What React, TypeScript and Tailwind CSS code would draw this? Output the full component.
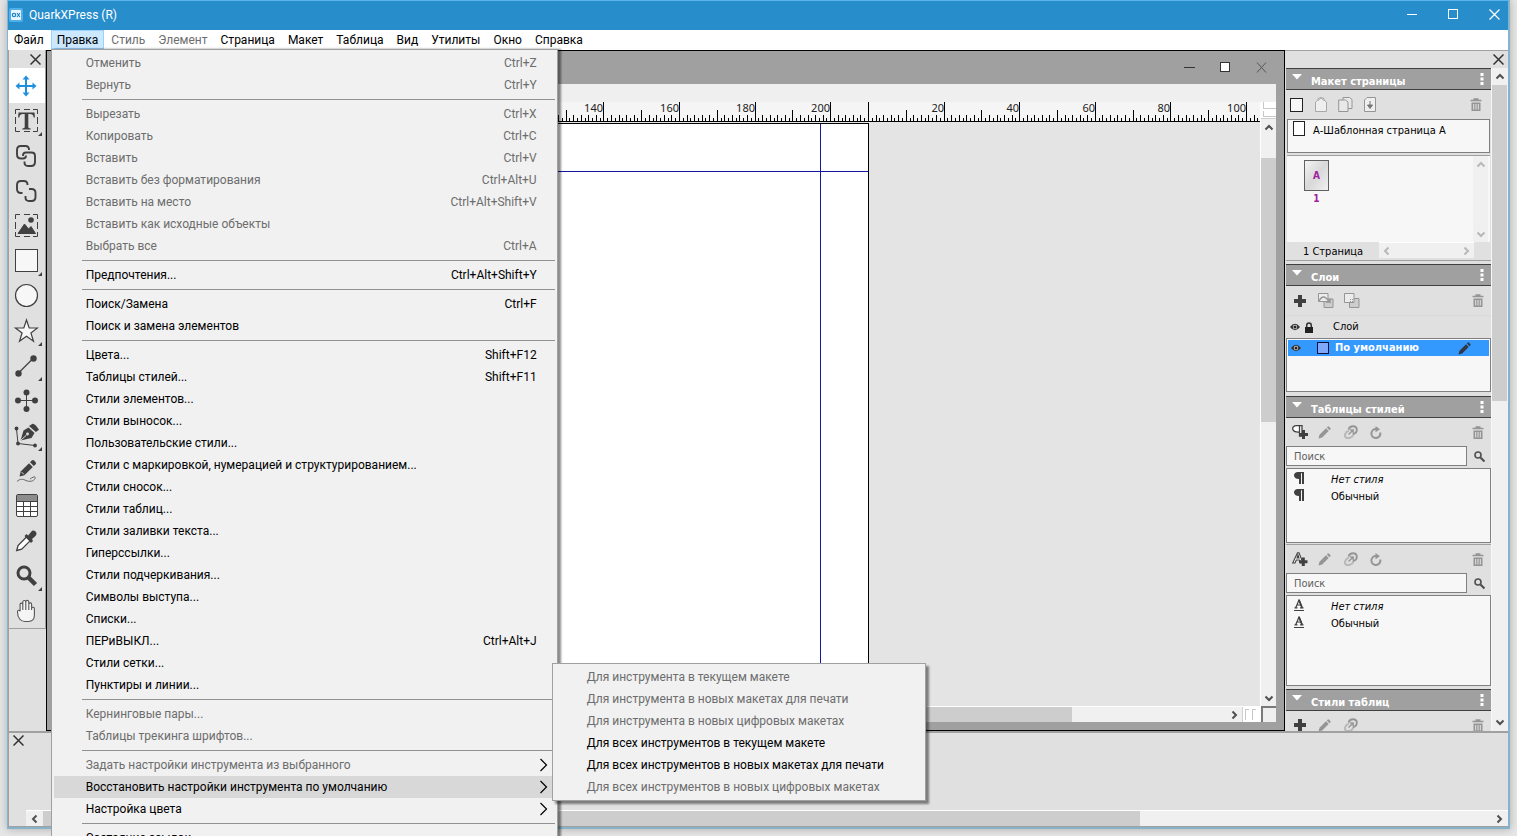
import React from "react";

type MenuEntry = { label: string; keys?: string; off?: boolean; sub?: boolean; active?: boolean } | null;

const MENU: MenuEntry[] = [
  { label: "Отменить", keys: "Ctrl+Z", off: true },
  { label: "Вернуть", keys: "Ctrl+Y", off: true },
  null,
  { label: "Вырезать", keys: "Ctrl+X", off: true },
  { label: "Копировать", keys: "Ctrl+C", off: true },
  { label: "Вставить", keys: "Ctrl+V", off: true },
  { label: "Вставить без форматирования", keys: "Ctrl+Alt+U", off: true },
  { label: "Вставить на место", keys: "Ctrl+Alt+Shift+V", off: true },
  { label: "Вставить как исходные объекты", off: true },
  { label: "Выбрать все", keys: "Ctrl+A", off: true },
  null,
  { label: "Предпочтения...", keys: "Ctrl+Alt+Shift+Y" },
  null,
  { label: "Поиск/Замена", keys: "Ctrl+F" },
  { label: "Поиск и замена элементов" },
  null,
  { label: "Цвета...", keys: "Shift+F12" },
  { label: "Таблицы стилей...", keys: "Shift+F11" },
  { label: "Стили элементов..." },
  { label: "Стили выносок..." },
  { label: "Пользовательские стили..." },
  { label: "Стили с маркировкой, нумерацией и структурированием..." },
  { label: "Стили сносок..." },
  { label: "Стили таблиц..." },
  { label: "Стили заливки текста..." },
  { label: "Гиперссылки..." },
  { label: "Стили подчеркивания..." },
  { label: "Символы выступа..." },
  { label: "Списки..." },
  { label: "ПЕРиВЫКЛ...", keys: "Ctrl+Alt+J" },
  { label: "Стили сетки..." },
  { label: "Пунктиры и линии..." },
  null,
  { label: "Кернинговые пары...", off: true },
  { label: "Таблицы трекинга шрифтов...", off: true },
  null,
  { label: "Задать настройки инструмента из выбранного", off: true, sub: true },
  { label: "Восстановить настройки инструмента по умолчанию", sub: true, active: true },
  { label: "Настройка цвета", sub: true },
  null,
  { label: "Состояние ссылок..." },
];

const SUBMENU = [
  { label: "Для инструмента в текущем макете", off: true },
  { label: "Для инструмента в новых макетах для печати", off: true },
  { label: "Для инструмента в новых цифровых макетах", off: true },
  { label: "Для всех инструментов в текущем макете", off: false },
  { label: "Для всех инструментов в новых макетах для печати", off: false },
  { label: "Для всех инструментов в новых цифровых макетах", off: true },
];

function Submenu() {
  return (
    <div role="menu" className="absolute top-[-113px] left-[500px] z-20 w-[374px] border border-[#a0a0a0] bg-[#f1f1f1] py-[2px] shadow-[3px_3px_2px_rgba(0,0,0,0.45)]">
      {SUBMENU.map((s) => (
        <button key={s.label} role="menuitem" disabled={s.off} className={"flex h-[22px] w-full items-center pl-[34px] " + (s.off ? "text-[#6d6d6d]" : "text-black")}>
          {s.label}
        </button>
      ))}
    </div>
  );
}

function EditMenu() {
  return (
    <div role="menu" className="absolute top-[19px] left-0 z-10 w-[507px] border border-[#a0a0a0] bg-[#f1f1f1] py-[2px] shadow-[3px_0_2px_rgba(0,0,0,0.45)]">
      {MENU.map((m, i) =>
        m === null ? (
          <div key={i} role="separator" className="flex h-[7px] items-center pr-[2px] pl-[30px]">
            <div className="h-px w-full bg-[#919191]" />
          </div>
        ) : (
          <div key={i} className="relative px-[2px]">
            <button
              role="menuitem"
              disabled={m.off}
              className={"flex h-[22px] w-full items-center justify-between pr-[18px] pl-8 whitespace-nowrap " + (m.off ? "text-[#6d6d6d] " : "text-black ") + (m.active ? "bg-[#d8d8d8]" : "")}
            >
              <span>{m.label}</span>
              {m.keys && <span>{m.keys}</span>}
              {m.sub && (
                <svg width="10" height="14" viewBox="0 0 10 14" className="-mr-3" fill="none" stroke="#000" strokeWidth="1.2">
                  <path d="M1.5 1l6 6-6 6" />
                </svg>
              )}
            </button>
            {m.active && <Submenu />}
          </div>
        ),
      )}
    </div>
  );
}

const BAR = [
  { label: "Файл" },
  { label: "Правка", open: true },
  { label: "Стиль", off: true },
  { label: "Элемент", off: true },
  { label: "Страница" },
  { label: "Макет" },
  { label: "Таблица" },
  { label: "Вид" },
  { label: "Утилиты" },
  { label: "Окно" },
  { label: "Справка" },
];

function MenuBar() {
  return (
    <nav className="flex h-5 gap-px bg-white text-[12px]">
      {BAR.map((b) => (
        <div key={b.label} className="relative">
          <button
            disabled={b.off}
            className={
              "flex h-[19px] items-center " +
              (b.open ? "border border-[#99d1ff] bg-[#cce8ff] px-[5px] " : "px-[6px] ") +
              (b.off ? "text-[#6d6d6d]" : "text-black")
            }
          >
            {b.label}
          </button>
          {b.open && <EditMenu />}
        </div>
      ))}
    </nav>
  );
}

function PixelCross() {
  return (
    <svg width="11" height="11" viewBox="0 0 11 11" fill="none" stroke="#333" strokeWidth="1.5">
      <path d="M.5.5l10 10M10.5.5l-10 10" />
    </svg>
  );
}

const D = "#404040";

const TOOLS: { name: string; more?: boolean; art: React.ReactNode }[] = [
  {
    name: "Перемещение",
    art: (
      <g stroke="#1f8fe0" fill="#1f8fe0">
        <path d="M13 5v16M5 13h16" strokeWidth="2" />
        <path d="M13 2.5l3.5 4h-7zM13 23.500l3.500-4h-7zM2.500 13l4-3.500v7zM23.500 13l-4-3.500v7z" stroke="none" />
      </g>
    ),
  },
  {
    name: "Текст",
    more: true,
    art: (
      <g>
        <path d="M2.500 6V1.500H7M11 1.500h6M20 1.500h4.500V6M24.500 9v7M24.500 19v4.500H20M17 23.500h-6M7 23.500H2.500V19M2.500 16V9" fill="none" stroke={D} />
        <path d="M5.500 4.500h16l.4 5h-1.200c-.5-2.600-1.400-3.400-3.800-3.400h-1.600v12.400c0 1.600.5 1.900 2.400 2v1H9.300v-1c1.900-.1 2.400-.4 2.400-2V6.100H10.100c-2.400 0-3.300.8-3.800 3.400H5.100z" fill={D} />
      </g>
    ),
  },
  {
    name: "Связь",
    art: (
      <g fill="none" stroke={D} strokeWidth="1.900">
        <path d="M16 7V6.500q0-3.500-3.500-3.500H8Q4 3 4 7v4.500q0 4 4 4h2q3 0 3-3" />
        <path d="M10 13v-.5q0-3 3-3h5.500q3.500 0 3.500 3.500v6q0 4-4 4h-3q-3.500 0-3.500-3.500v-1" />
      </g>
    ),
  },
  {
    name: "Разрыв связи",
    art: (
      <g fill="none" stroke={D} strokeWidth="1.900">
        <path d="M14.500 7V6.500Q14.500 3 11 3H8Q4 3 4 7v4q0 4 4 4h1.500" />
        <path d="M16 11h2.500Q22.500 11 22.500 15v4q0 4-4 4h-2.500q-3.500 0-3.500-3.500v-1.500" />
      </g>
    ),
  },
  {
    name: "Изображение",
    art: (
      <g>
        <path d="M2.500 6V1.500H7M11 1.500h6M20 1.500h4.500V6M24.500 9v7M24.500 19v4.500H20M17 23.500h-6M7 23.500H2.500V19M2.500 16V9" fill="none" stroke={D} />
        <path d="M5 20.500l6.500-9.500 4 5 2.500-2.500 4.500 7z" fill={D} stroke={D} strokeLinejoin="round" />
        <circle cx="18" cy="7" r="2.800" fill={D} />
      </g>
    ),
  },
  { name: "Прямоугольник", more: true, art: <rect x="2.500" y="1.500" width="22" height="22" fill="#f7f7f7" stroke={D} /> },
  { name: "Овал", art: <circle cx="13.500" cy="12.500" r="11" fill="#f7f7f7" stroke={D} strokeWidth="1.200" /> },
  {
    name: "Звезда",
    more: true,
    art: <path d="M13.500 2l2.700 8h8.300l-6.600 5 2.600 8.300-7-5.100-7 5.100L9.100 15l-6.600-5h8.300z" fill="#f7f7f7" stroke={D} strokeWidth="1.200" />,
  },
  {
    name: "Линия",
    more: true,
    art: (
      <g fill={D}>
        <path d="M5.500 20L20 5.500" stroke={D} strokeWidth="1.300" />
        <circle cx="5.500" cy="20.500" r="3.200" />
        <circle cx="20.500" cy="5.500" r="3.200" />
      </g>
    ),
  },
  {
    name: "Ортогональная линия",
    art: (
      <g fill={D}>
        <path d="M5 12.500h18M13.500 4v18" stroke={D} />
        <circle cx="5" cy="12.500" r="3" />
        <circle cx="22" cy="12.500" r="3" />
        <circle cx="13.500" cy="4.500" r="3" />
        <circle cx="13.500" cy="21" r="3" />
      </g>
    ),
  },
  {
    name: "Перо",
    more: true,
    art: (
      <g>
        <path d="M3.500 6l1.500 14.500 17 2" fill="none" stroke={D} />
        <circle cx="3.500" cy="5.500" r="1.900" fill={D} />
        <circle cx="5" cy="20.500" r="1.900" fill={D} />
        <circle cx="22" cy="22.500" r="1.900" fill={D} />
        <path d="M7.500 17.500L10.500 7.500l5-3 6 5.500-3 5z" fill={D} />
        <path d="M16 3l3.500-2.300q2.500-.5 6.500 6L22.800 9z" fill={D} />
        <path d="M7.500 17.500l6-5.500" stroke="#e0e0e0" />
        <circle cx="14.500" cy="11" r="1.400" fill="#e0e0e0" />
      </g>
    ),
  },
  {
    name: "Карандаш",
    art: (
      <g fill={D}>
        <path d="M6.500 18.500l1.200-5L16 5.300l3.800 3.800-8.300 8.200z" />
        <path d="M17 4.300l1.700-1.700q1.200-1.200 2.500 0l1.300 1.300q1.200 1.300 0 2.500L20.800 8z" />
        <path d="M4 23.500c3-3 6-2.500 9-1s8 1 9-2-2-1.500-5 .5" fill="none" stroke="#666" strokeWidth="1" />
        <path d="M8.700 14.200l2.200 2.200" stroke="#e0e0e0" />
      </g>
    ),
  },
  {
    name: "Таблица",
    art: (
      <g>
        <rect x="3.500" y="1.500" width="21" height="22" rx="1.500" fill="#fff" stroke={D} />
        <path d="M4 2h20v6H4z" fill="#8c8c8c" />
        <path d="M3.500 8.500h21M3.500 13.500h21M3.500 18.500h21M10.500 8.500v15M17.500 8.500v15" stroke={D} />
      </g>
    ),
  },
  {
    name: "Пипетка",
    art: (
      <g>
        <path d="M13.500 9L5 17.500 3.700 22.500l5-1.300 8.600-8.600z" fill="#fff" stroke={D} strokeWidth="1.300" />
        <path d="M11.500 8l2-2 1.700 1.500L18 4q2-2.500 4.500-.5 2 2 0 4.500l-3.500 3 1 2-2 2z" fill={D} />
      </g>
    ),
  },
  {
    name: "Масштаб",
    more: true,
    art: (
      <g fill="none" stroke={D}>
        <circle cx="11" cy="10" r="6" strokeWidth="3" />
        <path d="M15.500 14.500l7 7" strokeWidth="4.500" />
      </g>
    ),
  },
  {
    name: "Рука",
    art: (
      <path
        d="M4.500 14c-.2-2 2-2.400 2.600-.8V6.600c0-2 2.600-2 2.700 0V4c.2-2 2.900-2 3 0v-.5c.3-1.700 2.900-1.500 3 .5v2c.4-1.600 2.700-1.400 2.800.3v4c.4-1.500 2.800-1.300 2.800.4v6.300c0 4-2.400 6.500-6 6.500h-3.600c-4 0-7.300-3.500-7.300-9.500zM9.800 6v6M12.800 4v8M15.800 5v7M18.600 8v4"
        fill="#f5f5f5"
        stroke="#555"
        strokeWidth="1.100"
      />
    ),
  },
];

function Toolbar() {
  return (
    <aside className="flex w-[38px] shrink-0 flex-col border-l border-[#a0a0a0] bg-[#e0e0e0]">
      <div className="border-r border-b border-[#a0a0a0]">
        <div className="flex h-[18px] items-center justify-end pr-1">
          <button aria-label="Закрыть панель инструментов">
            <PixelCross />
          </button>
        </div>
        {TOOLS.map((t, i) => (
          <button key={t.name} aria-label={t.name} className={"relative flex h-[35px] w-full items-center pl-1 " + (i === 0 ? "bg-white" : "")}>
            <svg width="26" height="26" viewBox="0 0 26 26">
              {t.art}
            </svg>
            {t.more && (
              <svg width="4" height="4" viewBox="0 0 4 4" className="absolute right-[3px] bottom-[2px]">
                <path d="M4 0v4H0z" fill={D} />
              </svg>
            )}
          </button>
        ))}
      </div>
    </aside>
  );
}

function Chevron({ dir, dim }: { dir: "up" | "down" | "left" | "right"; dim?: boolean }) {
  const d = {
    up: "M1.500 6.500L5 3l3.500 3.500",
    down: "M1.500 3.500L5 7l3.500-3.500",
    left: "M6.500 1.500L3 5l3.500 3.500",
    right: "M3.500 1.500L7 5 3.500 8.500",
  }[dir];
  return (
    <svg width="10" height="10" viewBox="0 0 10 10" fill="none" stroke={dim ? "#b8b8b8" : "#505050"} strokeWidth="2">
      <path d={d} />
    </svg>
  );
}

const MM = 3.78;
const EDGE = 813.5;

function Ruler() {
  const ticks: React.ReactNode[] = [];
  for (let mm = -210; mm <= 103; mm++) {
    const x = Math.floor(EDGE + mm * MM) + 0.5;
    const up = mm < 0 ? mm + 210 : mm;
    const top = up % 20 === 0 || mm === 0 ? 0 : up % 10 === 0 ? 8 : up % 2 === 0 ? 13 : 16;
    ticks.push(<path key={mm} d={`M${x} ${top}V19`} stroke="#000" />);
  }
  const labels: [number, string][] = [];
  for (let v = 140; v <= 200; v += 20) labels.push([EDGE + (v - 210) * MM, String(v)]);
  for (let v = 20; v <= 100; v += 20) labels.push([EDGE + v * MM, String(v)]);
  return (
    <div className="h-5 flex-1 overflow-x-clip border-b border-black bg-[#f5f5f5] font-['Noto_Sans',sans-serif]">
      <svg width="1205" height="19" className="overflow-visible">
        {ticks}
        {labels.map(([x, t]) => (
          <text key={x} x={Math.floor(x)} y="10" textAnchor="end" fill="#222" className="text-[11px]">
            {t}
          </text>
        ))}
      </svg>
    </div>
  );
}

function DocumentWindow() {
  return (
    <main className="flex min-w-0 flex-1 flex-col border border-black bg-[#a0a0a0] px-2 pb-2">
      <div className="flex h-[33px] items-center justify-end gap-[25px] pr-[9px]">
        <button aria-label="Свернуть документ">
          <svg width="11" height="11" viewBox="0 0 11 11"><path d="M0 5.500h11" stroke="#333" /></svg>
        </button>
        <button aria-label="Развернуть документ">
          <svg width="11" height="11" viewBox="0 0 11 11"><rect x=".5" y=".5" width="9" height="9" fill="#fff" stroke="#333" /></svg>
        </button>
        <button aria-label="Закрыть документ">
          <svg width="11" height="11" viewBox="0 0 11 11"><path d="M1 .5l9 10M10 .5l-9 10" stroke="#555" /></svg>
        </button>
      </div>
      <div className="h-[18px] bg-[#efefef]" />
      <div className="flex min-h-0 flex-1">
        <div className="flex min-w-0 flex-1 flex-col">
          <div className="flex">
            <Ruler />
          </div>
          <div className="min-h-0 flex-1 overflow-hidden bg-[#e4e4e4] pt-px">
            <div className="relative h-full w-[814px] border-t border-r border-black bg-white">
              <div className="absolute inset-x-0 top-[47px] h-px bg-[#1515a0]" />
              <div className="absolute inset-y-0 right-[47px] w-px bg-[#1515a0]" />
            </div>
          </div>
          <div className="flex h-4 border-t border-white bg-[#f0f0f0]">
            <div className="w-[1017px] bg-[#cdcdcd]" />
            <div className="flex flex-1 items-center justify-end pr-[3px]">
              <Chevron dir="right" />
            </div>
            <div className="flex w-[18px] gap-[3px] border-l border-[#d0d0d0] bg-white p-[2px]">
              <div className="w-1 border-t border-l border-[#c8c8c8]" />
              <div className="w-1 border-t border-l border-[#c8c8c8]" />
            </div>
          </div>
        </div>
        <div className="flex w-4 flex-col border-l border-white bg-[#f0f0f0]">
          <div className="flex h-[17px] flex-col gap-[2px] border-b border-[#d0d0d0] bg-white pl-[2px]">
            <div className="h-[7px] border-b border-l border-[#c8c8c8]" />
            <div className="h-[6px] border-b border-l border-[#c8c8c8]" />
          </div>
          <div className="flex h-[39px] justify-center pt-1">
            <Chevron dir="up" />
          </div>
          <div className="h-[264px] bg-[#cdcdcd]" />
          <div className="flex flex-1 items-end justify-center pb-[3px]">
            <Chevron dir="down" />
          </div>
          <div className="h-4 border-t-2 border-l-2 border-[#7a7a7a] bg-[#efefef]" />
        </div>
      </div>
    </main>
  );
}

function PanelHeader({ title }: { title: string }) {
  return (
    <div className="flex h-[22px] shrink-0 border-y border-[#404040] bg-[#a0a0a0] pr-[7px] pl-[6px]">
      <svg width="10" height="6" viewBox="0 0 10 6" className="mt-[5px]"><path d="M0 0h10L5 5.500z" fill="#fff" /></svg>
      <h2 className="flex-1 pt-[5px] pl-[9px] text-[11px] leading-[16px] font-bold text-white">{title}</h2>
      <svg width="4" height="12" viewBox="0 0 4 12" className="mt-[4px]" fill="#fff"><path d="M.5 0h3v3h-3zM.5 4.500h3v3h-3zM.5 9h3v3h-3z" /></svg>
    </div>
  );
}

const G = "#959595";

function Trash() {
  return (
    <svg width="12" height="13" viewBox="0 0 12 13">
      <path d="M.5 2.500h11M3.500 1h5" stroke={G} strokeWidth="1.600" />
      <path d="M1.500 4.500h9V13h-9z" fill={G} />
      <path d="M3.700 6v5.500M6 6v5.500M8.300 6v5.500" stroke="#e4e4e4" />
    </svg>
  );
}
function Plus() {
  return (
    <svg width="16" height="12" viewBox="0 0 16 12"><path d="M8 0v12M2 6h12" stroke={D} strokeWidth="4" /></svg>
  );
}
function Pencil({ color = G }: { color?: string }) {
  return (
    <svg width="13" height="13" viewBox="0 0 13 13" fill={color}>
      <path d="M.5 12.500l1-3.700L8 2.300 10.700 5l-6.500 6.500z" />
      <path d="M8.800 1.500l.8-.8q.8-.7 1.500 0l1.200 1.200q.7.700 0 1.500l-.8.800z" />
    </svg>
  );
}
function Clone() {
  return (
    <svg width="14" height="14" viewBox="0 0 14 14" fill="none">
      <path d="M5 5.500L2.500 7 1 9.500v2L2.500 13h3l3-1.700 1-2.800" stroke="#b8b8b8" strokeWidth="1.900" />
      <path d="M4.500 4.500q1-3.300 4.500-3.300 3.800 0 3.800 3.600T9 9" stroke={G} strokeWidth="1.900" />
      <path d="M4.500 9.500L8.500 5.700M6 5h3.200v3" stroke="#9a9a9a" strokeWidth="1.500" />
    </svg>
  );
}
function Refresh() {
  return (
    <svg width="12" height="13" viewBox="0 0 12 13" fill="none">
      <path d="M6 3A4.500 4.500 0 1 0 10.300 8.500V6.500" stroke={G} strokeWidth="2" />
      <path d="M5.500 0l4.500 3.200-4.500 3z" fill={G} />
    </svg>
  );
}

function IconRow({ children, className = "" }: { children: React.ReactNode[]; className?: string }) {
  return (
    <div className={"flex shrink-0 items-center pr-[7px] pl-[6px] " + className}>
      {children.map((c, i) => (
        <button key={i} aria-label={["Создать", "Правка", "Дублировать", "Обновить"][i]} className="flex w-[26px] items-center">
          {c}
        </button>
      ))}
      <button aria-label="Удалить" className="ml-auto">
        <Trash />
      </button>
    </div>
  );
}

function Search({ id }: { id: string }) {
  return (
    <div className="flex h-5 shrink-0 items-center">
      <label htmlFor={id} className="sr-only">Поиск</label>
      <input id={id} placeholder="Поиск" className="h-5 w-[181px] border border-[#808080] bg-[#f7f7f7] px-[7px] text-[11px] placeholder:text-[#606060]" />
      <svg width="11" height="11" viewBox="0 0 11 11" className="ml-[7px]" fill="none" stroke="#505050">
        <circle cx="4" cy="4" r="3" strokeWidth="1.600" />
        <path d="M6.500 6.500l4 4" strokeWidth="2.200" />
      </svg>
    </div>
  );
}

function Pilcrow() {
  return (
    <svg width="10" height="12" viewBox="0 0 10 12" fill={D}>
      <path d="M10 0v12H8V1.300H7V12H5V7C-1.500 7-1.500 0 4 0z" />
    </svg>
  );
}
function UnderlinedA() {
  return (
    <svg width="10" height="12" viewBox="0 0 10 12" fill="none" stroke={D}>
      <path d="M0 11.500h10" />
      <path d="M1.800 8.500L5 1l3 7.500M3 6h4M.5 8.800h3M6 8.800h3.500" strokeWidth="1.200" />
      <path d="M5 1l3 7.500" strokeWidth="1.800" />
    </svg>
  );
}

function StyleList({ icon, className }: { icon: React.ReactNode; className: string }) {
  return (
    <ul className={"shrink-0 border border-[#808080] bg-[#f7f7f7] pt-[3px] pl-[7px] leading-[15px] " + className}>
      <li className="flex h-[17px]"><span className="w-[37px]">{icon}</span><i>Нет стиля</i></li>
      <li className="flex h-[17px]"><span className="w-[37px]">{icon}</span>Обычный</li>
    </ul>
  );
}

function Eye() {
  return (
    <svg width="10" height="8" viewBox="0 0 10 8">
      <path d="M0 4q5-6.500 10 0-5 6.500-10 0z" fill="#333" />
      <circle cx="5" cy="4" r="2.200" fill="#ddd" />
      <circle cx="5" cy="4" r="1.500" fill="#222" />
    </svg>
  );
}

function Palettes() {
  return (
    <aside className="flex w-[223px] shrink-0 flex-col border-t border-[#a0a0a0] bg-[#e0e0e0] font-['DejaVu_Sans_Condensed','DejaVu_Sans',sans-serif] text-[11px]">
      <div className="flex h-[17px] shrink-0 items-center justify-end pr-1">
        <button aria-label="Закрыть палитры">
          <PixelCross />
        </button>
      </div>
      <div className="flex min-h-0 flex-1">
        <div className="flex min-w-0 flex-1 flex-col overflow-hidden pl-px">
          <PanelHeader title="Макет страницы" />
          <div className="flex h-[29px] shrink-0 items-center gap-[11px] pr-[9px] pl-1">
            <button aria-label="Пустая страница"><svg width="14" height="14" viewBox="0 0 14 14"><rect x=".5" y=".5" width="12" height="13" fill="#f7f7f7" stroke="#222" /></svg></button>
            <button aria-label="Вставить страницы"><svg width="12" height="15" viewBox="0 0 12 15" fill="#eee" stroke="#a8a8a8"><path d="M.5 5L3 3V1.500L6 .5l3 1V3l2.500 2v9.500H.5zM3 3.500L6 1l3 2.500" /></svg></button>
            <button aria-label="Дублировать страницу"><svg width="15" height="15" viewBox="0 0 15 15" fill="#e8e8e8" stroke={G}><path d="M5 .5h6.500l2.500 2v9H5z" /><path d="M.7 3h6.800l2.500 2v9.500H.7z" /></svg></button>
            <button aria-label="Раздел"><svg width="12" height="15" viewBox="0 0 12 15" fill="#eee" stroke={G}><path d="M3 .5h8.500v14H.5V3z" /><path d="M6 4v4M3.500 8h5L6 11.500z" fill="#777" stroke="#777" /></svg></button>
            <button aria-label="Удалить страницу" className="ml-auto"><Trash /></button>
          </div>
          <div className="mx-px flex h-[34px] shrink-0 gap-[7px] border border-[#808080] bg-[#f7f7f7] pt-[1px] pl-[5px] text-black">
            <svg width="13" height="15" viewBox="0 0 13 15"><rect x=".5" y=".5" width="11" height="14" fill="#fff" stroke="#222" /></svg>
            <span className="leading-5">А-Шаблонная страница А</span>
          </div>
          <div className="mx-px mt-[2px] flex h-[87px] shrink-0 border-t border-[#a0a0a0] bg-[#f7f7f7]">
            <div className="flex flex-1 flex-col items-start pt-1 pl-[17px] text-[10px] font-bold text-[#a020a0]">
              <div className="flex w-[25px] flex-col items-center">
                <div className="flex h-[31px] w-full items-center justify-center border border-[#606060] bg-linear-to-br from-[#f4f4f4] via-[#d8d8d8] to-[#f0f0f0]">А</div>
                <span className="leading-[16px]">1</span>
              </div>
            </div>
            <div className="mr-[2px] flex w-[15px] flex-col items-center justify-between bg-[#f0f0f0] pt-1 pb-[3px]">
              <Chevron dir="up" dim />
              <Chevron dir="down" dim />
            </div>
          </div>
          <div className="flex h-[19px] shrink-0 border-b border-[#a0a0a0] pb-[2px]">
            <span className="w-[93px] pl-[17px] leading-[19px] text-black">1 Страница</span>
            <div className="flex w-[95px] items-center justify-between border-t border-white bg-[#f0f0f0] px-[3px]">
              <Chevron dir="left" dim />
              <Chevron dir="right" dim />
            </div>
          </div>
          <div className="h-[3px] shrink-0" />

          <PanelHeader title="Слои" />
          <IconRow className="h-[29px]">
            {[
              <Plus key="a" />,
              <svg key="b" width="16" height="15" viewBox="0 0 16 15" stroke={G}><path d="M6 6h9v8.500H6z" fill="#cdcdcd" /><path d="M.5.500h9.500v8H.5z" fill="#ececec" /><path d="M1 8q3-6 7-3l4 4V5.500M12 9H8" fill="none" strokeWidth="1.400" /></svg>,
              <svg key="c" width="16" height="15" viewBox="0 0 16 15" stroke={G}><path d="M5.500 5.500h9.500v9H5.500z" fill="#cdcdcd" /><path d="M.5.500h9.500v9H.5z" fill="#ececec" /><path d="M6 6.500h3M6 8.500h3" strokeDasharray="1 1" /></svg>,
            ]}
          </IconRow>
          <div className="flex h-[23px] shrink-0 items-center border-t border-[#d8d8d8] pl-1 text-black">
            <Eye />
            <svg width="8" height="11" viewBox="0 0 8 11" className="ml-[5px]"><path d="M0 5h8v6H0z" fill="#222" /><path d="M1.700 5V3.500q0-2.500 2.300-2.500t2.300 2.500V5" fill="none" stroke="#333" strokeWidth="1.500" /></svg>
            <span className="pl-5">Слой</span>
          </div>
          <div className="h-[54px] shrink-0 border border-[#808080] bg-[#f7f7f7] p-px">
            <div className="flex h-4 items-center bg-[#3399ff] pl-[3px] font-bold text-white">
              <Eye />
              <span className="mr-[6px] ml-4 h-3 w-3 border border-[#101040] bg-[#80a8f8]" />
              <span className="flex-1">По умолчанию</span>
              <span className="mr-[18px]"><Pencil color="#303848" /></span>
            </div>
          </div>
          <div className="h-1 shrink-0" />

          <PanelHeader title="Таблицы стилей" />
          <IconRow className="h-7">
            {[
              <svg key="a" width="16" height="14" viewBox="0 0 16 14"><path d="M4.500.7H10V11H7.500V7C-1 7.500-1 .7 4.500.7zM7.500 1v7" fill="#fff" stroke={D} strokeWidth="1.300" /><path d="M11.500 5v9M7 9.500h9" stroke={D} strokeWidth="3" /></svg>,
              <Pencil key="b" />,
              <Clone key="c" />,
              <Refresh key="d" />,
            ]}
          </IconRow>
          <Search id="paragraph-search" />
          <StyleList icon={<Pilcrow />} className="mt-[2px] h-[75px]" />
          <div className="h-[2px] shrink-0 border-b border-[#a0a0a0]" />
          <IconRow className="h-7">
            {[
              <svg key="a" width="16" height="14" viewBox="0 0 16 14" fill="none" stroke={D}><path d="M.7 11L5.500.7h1.500L11 11H8.500L7.500 8H4.300L3 11zM5 6h2L6 3z" fill="#fff" strokeWidth="1.100" /><path d="M11.300 5.500V14M7 9.700h8.500" strokeWidth="3" /></svg>,
              <Pencil key="b" />,
              <Clone key="c" />,
              <Refresh key="d" />,
            ]}
          </IconRow>
          <Search id="character-search" />
          <StyleList icon={<UnderlinedA />} className="mt-[2px] h-[91px]" />
          <div className="h-[3px] shrink-0" />

          <PanelHeader title="Стили таблиц" />
          <IconRow className="h-7">{[<Plus key="a" />, <Pencil key="b" />, <Clone key="c" />]}</IconRow>
        </div>
        <div className="flex w-[17px] flex-col border-l border-[#f7f7f7] bg-[#f0f0f0] pr-px">
          <div className="flex h-[17px] items-center justify-center"><Chevron dir="up" /></div>
          <div className="h-[316px] bg-[#cdcdcd]" />
          <div className="flex flex-1 items-end justify-center pb-1"><Chevron dir="down" /></div>
        </div>
      </div>
    </aside>
  );
}

export default function App() {
  return (
    <div className="flex h-screen flex-col overflow-hidden bg-[#e6e6e6] px-[7px] pb-[7px] font-['Roboto',sans-serif]">
      <div className="flex min-h-0 flex-1 flex-col border-t border-r-2 border-b-2 border-l border-t-[#5bb5ea] border-r-[#86b2ca] border-b-[#86b2ca] border-l-[#7fb8dc] bg-[#f0f0f0] shadow-[0_0_8px_rgba(0,0,0,0.25)]">
        <header className="flex h-[29px] shrink-0 items-center bg-[#288dcb] pr-2 pb-[2px] pl-[1px] text-white">
          <svg width="14" height="14" viewBox="0 0 14 14">
            <rect width="14" height="14" rx="2" fill="#4fb0ea" />
            <rect x="2" y="2" width="10" height="10" rx="1" fill="#eaf6ff" />
            <circle cx="5" cy="7" r="1.700" fill="none" stroke="#1f85c8" strokeWidth="1.200" />
            <path d="M8 5l3 4M11 5L8 9" stroke="#1f85c8" strokeWidth="1.200" />
          </svg>
          <h1 className="flex-1 pl-[6px] text-[12px]">QuarkXPress (R)</h1>
          <div className="flex items-center gap-[30px]">
            <button aria-label="Свернуть"><svg width="11" height="11" viewBox="0 0 11 11"><path d="M0 5.500h10" stroke="#fff" /></svg></button>
            <button aria-label="Развернуть"><svg width="11" height="11" viewBox="0 0 11 11"><rect x=".5" y=".5" width="9" height="9" fill="none" stroke="#fff" /></svg></button>
            <button aria-label="Закрыть"><svg width="11" height="11" viewBox="0 0 11 11"><path d="M.5.500l10 10M10.500.500l-10 10" stroke="#fff" strokeWidth="1.200" /></svg></button>
          </div>
        </header>
        <MenuBar />
        <div className="flex min-h-0 flex-1">
          <Toolbar />
          <DocumentWindow />
          <Palettes />
        </div>
        <footer className="flex h-[96px] shrink-0 flex-col justify-between border-t-2 border-b border-l border-[#a0a0a0] bg-[#e0e0e0]">
          <button aria-label="Закрыть панель" className="mt-[2px] ml-1 self-start">
            <PixelCross />
          </button>
          <div className="ml-[17px] flex h-4 border-t border-white bg-[#f0f0f0]">
            <div className="flex w-[17px] items-center justify-center"><Chevron dir="left" /></div>
            <div className="w-[74%] bg-[#cdcdcd]" />
            <div className="flex flex-1 items-center justify-end pr-1"><Chevron dir="right" /></div>
          </div>
        </footer>
      </div>
    </div>
  );
}
